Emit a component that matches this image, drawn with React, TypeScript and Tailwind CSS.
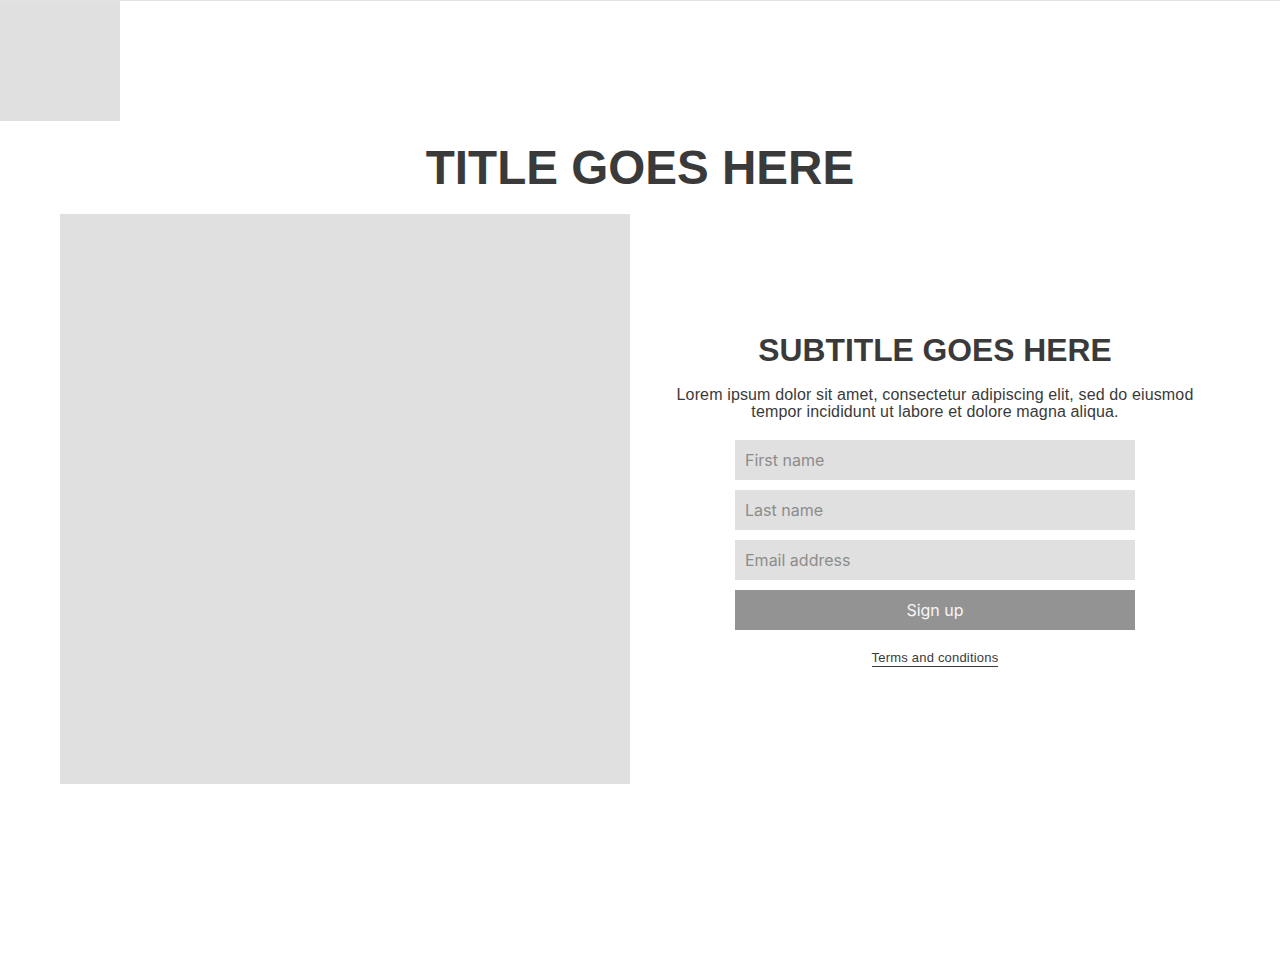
export default function App() {
  const heading = { fontFamily: '"Liberation Sans", Arial, sans-serif' };
  const ui = { fontFamily: 'Inter, "Liberation Sans", sans-serif' };
  return (
    <div className="min-h-[978px] w-full bg-white border-t border-[#e3e3e3]" style={heading}>
      <div className="h-[120px] w-[120px] bg-[#e0e0e0]" />
      <h1 className="mt-[23px] mb-[22px] text-center text-[47.6px] leading-[48px] font-bold text-[#3a3a3a]">
        TITLE GOES HERE
      </h1>
      <div className="flex px-[60px]">
        <div className="h-[570px] w-[570px] shrink-0 bg-[#e0e0e0]" />
        <div className="flex flex-1 flex-col items-center justify-center pl-5">
          <h2 className="text-center text-[31.8px] leading-[38px] font-bold text-[#3a3a3a]">
            SUBTITLE GOES HERE
          </h2>
          <p className="mt-[17px] max-w-[560px] text-center text-[16px] leading-[17px] tracking-[0.14px] text-[#3a3a3a]">
            Lorem ipsum dolor sit amet, consectetur adipiscing elit, sed do eiusmod tempor incididunt ut labore et dolore magna aliqua.
          </p>
          <form className="mt-5 flex w-[400px] flex-col gap-[10px]" style={ui} onSubmit={(e) => e.preventDefault()}>
            <input
              className="h-10 w-full bg-[#e0e0e0] px-[10px] text-[16px] text-[#3a3a3a] placeholder:text-[#8c8c8c] outline-none"
              placeholder="First name"
            />
            <input
              className="h-10 w-full bg-[#e0e0e0] px-[10px] text-[16px] text-[#3a3a3a] placeholder:text-[#8c8c8c] outline-none"
              placeholder="Last name"
            />
            <input
              className="h-10 w-full bg-[#e0e0e0] px-[10px] text-[16px] text-[#3a3a3a] placeholder:text-[#8c8c8c] outline-none"
              placeholder="Email address"
            />
            <button className="h-10 w-full bg-[#939393] text-[16px] text-[#f7f7f7]">Sign up</button>
          </form>
          <a
            href="#"
            className="mt-[20px] border-b border-[#3a3a3a] text-[13px] leading-[16px] tracking-[0.2px] text-[#3a3a3a]"
            style={heading}
          >
            Terms and conditions
          </a>
        </div>
      </div>
    </div>
  );
}
